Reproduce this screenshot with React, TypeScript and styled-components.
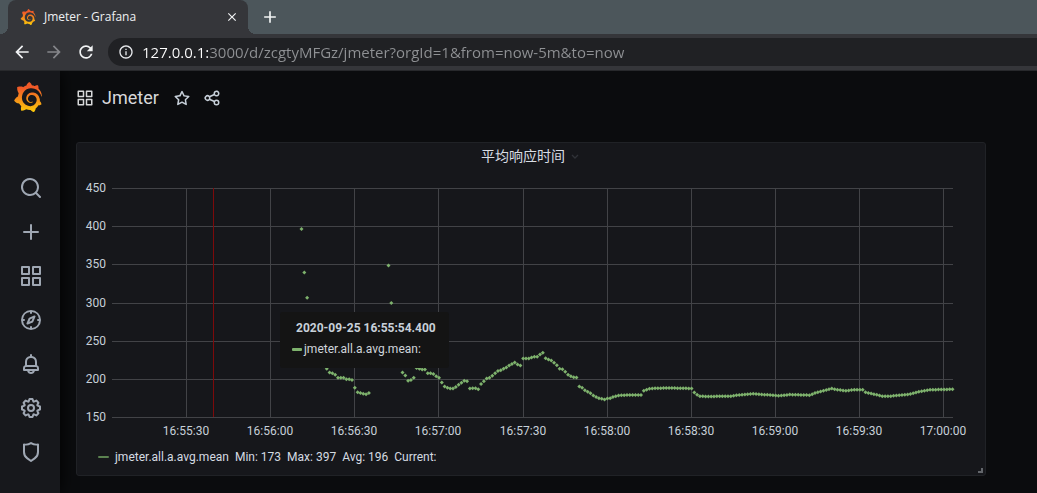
import React from "react";
import styled, { createGlobalStyle } from "styled-components";
import { SiGrafana } from "react-icons/si";
import { MdArrowBack, MdArrowForward, MdRefresh, MdClose, MdAdd, MdInfoOutline } from "react-icons/md";

const GlobalStyle = createGlobalStyle`
  *, *::before, *::after { box-sizing: border-box; }
  body {
    margin: 0;
    background: #0b0c0e;
    color: #c7d0d9;
    font-family: Roboto, "Noto Sans CJK SC", sans-serif;
    overflow-x: hidden;
  }
  button { border: 0; padding: 0; background: none; color: inherit; font: inherit; cursor: pointer; }
`;

const Window = styled.div`
  display: flex;
  flex-direction: column;
  min-height: 100vh;
`;

const TabStrip = styled.div`
  display: flex;
  align-items: stretch;
  height: 34px;
  padding-left: 8px;
  background: #4c565b;
`;

const Tab = styled.div`
  position: relative;
  display: flex;
  align-items: center;
  width: 240px;
  padding: 0 9px 0 12px;
  border-radius: 8px 8px 0 0;
  background: #35363a;
  color: #eef0f2;
  font: 12px/16px "Open Sans", sans-serif;

  &::before, &::after {
    content: "";
    position: absolute;
    bottom: 0;
    width: 8px;
    height: 8px;
  }
  &::before { right: 100%; background: radial-gradient(circle at 0 0, transparent 8px, #35363a 8px); }
  &::after { left: 100%; background: radial-gradient(circle at 100% 0, transparent 8px, #35363a 8px); }
`;

const TabTitle = styled.span`
  flex: 1;
  margin-left: 8px;
  white-space: nowrap;
`;

const ChromeButton = styled.button<{ $size: number; $dim?: boolean }>`
  display: grid;
  place-items: center;
  width: ${(p) => p.$size}px;
  height: ${(p) => p.$size}px;
  color: ${(p) => (p.$dim ? "#85868a" : "#f1f3f4")};
`;

const NewTab = styled(ChromeButton)`
  align-self: center;
  margin-left: 12px;
`;

const Toolbar = styled.div`
  display: flex;
  align-items: center;
  gap: 12px;
  height: 37px;
  padding-left: 12px;
  border-bottom: 1px solid #28292c;
  background: #35363a;
`;

const AddressBar = styled.label`
  flex: 1;
  display: flex;
  align-items: center;
  gap: 8px;
  height: 28px;
  padding-left: 10px;
  border-radius: 14px 0 0 14px;
  background: #202124;
  color: #e8eaed;
`;

/* The host part of the address is brighter than the path behind it. */
const AddressInput = styled.input`
  flex: 1;
  min-width: 0;
  height: 28px;
  padding: 0;
  border: 0;
  outline: 0;
  font: 15px/28px "Open Sans", sans-serif;
  color: #9aa0a6;
  background: linear-gradient(90deg, #ffffff 67px, #8f9194 67px);
  background-clip: text;
  -webkit-background-clip: text;
  -webkit-text-fill-color: transparent;
`;

const Workspace = styled.div`
  flex: 1;
  display: flex;
`;

const Sidebar = styled.nav`
  display: flex;
  flex-direction: column;
  align-items: center;
  width: 60px;
  padding: 11px 0 0 2px;
  background: #17181c;
  box-shadow: 0 0 16px #000000;
  clip-path: inset(0 -20px 0 0);
  color: #9fa7b3;
`;

const Brand = styled.a`
  display: block;
  height: 32px;
  margin: 0 6px 52px 0;
  svg { display: block; }
`;

const NavLink = styled.a`
  display: grid;
  place-items: center;
  width: 44px;
  height: 44px;
  color: inherit;
`;

const Main = styled.main`
  flex: 1;
  min-width: 0;
  padding: 0 51px 17px 16px;
`;

const PageBar = styled.header`
  display: flex;
  align-items: center;
  height: 54px;
  margin-bottom: 17px;
  color: #d8d9da;
`;

const PageTitle = styled.h1`
  margin: 0 14px 0 8px;
  font-size: 18px;
  line-height: 24px;
  font-weight: 400;
`;

const BarButton = styled.button`
  display: grid;
  margin-right: 12px;
  color: #c7d0d9;
`;

const Panel = styled.section`
  position: relative;
  border: 1px solid #202226;
  border-radius: 3px;
  background: #16171b;
`;

const PanelHeader = styled.header`
  display: flex;
  justify-content: center;
  align-items: center;
  gap: 4px;
  height: 28px;
  padding-bottom: 2px;
`;

const PanelTitle = styled.h2`
  margin: 0;
  font-size: 14px;
  line-height: 20px;
  font-weight: 400;
  color: #d8dde4;
`;

const Chart = styled.svg`
  display: block;
  width: 100%;
  height: auto;
  font-size: 12px;
  fill: #c7d0d9;
`;

const Legend = styled.div`
  display: flex;
  align-items: center;
  gap: 6px;
  height: 32px;
  padding: 0 21px 4px;
  font-size: 12px;
  line-height: 18px;
  color: #d5dbe2;
`;

const Swatch = styled.span<{ $width: number; $height: number; $color: string }>`
  width: ${(p) => p.$width}px;
  height: ${(p) => p.$height}px;
  border-radius: 1px;
  background: ${(p) => p.$color};
`;

const Tooltip = styled.div`
  position: absolute;
  left: 203px;
  top: 169px;
  width: 169px;
  height: 56px;
  padding: 6px 12px;
  border-radius: 3px;
  background: #141414;
  font-size: 12px;
  color: #d0d5db;
`;

const TooltipTime = styled.div`
  padding-left: 4px;
  line-height: 20px;
  font-weight: 700;
  white-space: nowrap;
  color: #c7d0d9;
`;

const TooltipSeries = styled.div`
  display: flex;
  align-items: center;
  gap: 2px;
  line-height: 22px;
`;

const ResizeHandle = styled.span`
  position: absolute;
  right: 2px;
  bottom: 2px;
  width: 5px;
  height: 5px;
  border: solid #63666b;
  border-width: 0 2px 2px 0;
`;

const ICONS = {
  search: "M21.71,20.29,18,16.61A9,9,0,1,0,16.61,18l3.68,3.68a1,1,0,0,0,1.42,0A1,1,0,0,0,21.71,20.29ZM11,18a7,7,0,1,1,7-7A7,7,0,0,1,11,18Z",
  plus: "M19,11H13V5a1,1,0,0,0-2,0v6H5a1,1,0,0,0,0,2h6v6a1,1,0,0,0,2,0V13h6a1,1,0,0,0,0-2Z",
  apps: "M10,13H3a1,1,0,0,0-1,1v7a1,1,0,0,0,1,1h7a1,1,0,0,0,1-1V14A1,1,0,0,0,10,13ZM9,20H4V15H9ZM21,2H14a1,1,0,0,0-1,1v7a1,1,0,0,0,1,1h7a1,1,0,0,0,1-1V3A1,1,0,0,0,21,2ZM20,9H15V4h5Zm1,4H14a1,1,0,0,0-1,1v7a1,1,0,0,0,1,1h7a1,1,0,0,0,1-1V14A1,1,0,0,0,21,13Zm-1,7H15V15h5ZM10,2H3A1,1,0,0,0,2,3v7a1,1,0,0,0,1,1h7a1,1,0,0,0,1-1V3A1,1,0,0,0,10,2ZM9,9H4V4H9Z",
  compass: "M12,2A10,10,0,1,0,22,12,10,10,0,0,0,12,2Zm1,17.93V19a1,1,0,0,0-2,0v.93A8,8,0,0,1,4.07,13H5a1,1,0,0,0,0-2H4.07A8,8,0,0,1,11,4.07V5a1,1,0,0,0,2,0V4.07A8,8,0,0,1,19.93,11H19a1,1,0,0,0,0,2h.93A8,8,0,0,1,13,19.93ZM15.14,7.55l-5,2.12a1,1,0,0,0-.52.52l-2.12,5a1,1,0,0,0,.21,1.1,1,1,0,0,0,.7.3.93.93,0,0,0,.4-.09l5-2.12a1,1,0,0,0,.52-.52l2.12-5a1,1,0,0,0-1.31-1.31Zm-2.49,5.1-2.28,1,1-2.28,2.28-1Z",
  bell: "M18,13.18V10a6,6,0,0,0-5-5.91V3a1,1,0,0,0-2,0V4.09A6,6,0,0,0,6,10v3.18A3,3,0,0,0,4,16v2a1,1,0,0,0,1,1H8.14a4,4,0,0,0,7.72,0H19a1,1,0,0,0,1-1V16A3,3,0,0,0,18,13.18ZM8,10a4,4,0,0,1,8,0v3H8Zm4,10a2,2,0,0,1-1.72-1h3.44A2,2,0,0,1,12,20Zm6-3H6V16a1,1,0,0,1,1-1H17a1,1,0,0,1,1,1Z",
  cog: "M21.32,9.55l-1.89-.63.89-1.78A1,1,0,0,0,20.13,6L18,3.87a1,1,0,0,0-1.15-.19l-1.78.89-.63-1.89A1,1,0,0,0,13.5,2h-3a1,1,0,0,0-.95.68L8.92,4.57,7.14,3.68A1,1,0,0,0,6,3.87L3.87,6a1,1,0,0,0-.19,1.15l.89,1.78-1.89.63A1,1,0,0,0,2,10.5v3a1,1,0,0,0,.68.95l1.89.63-.89,1.78A1,1,0,0,0,3.87,18L6,20.13a1,1,0,0,0,1.15.19l1.78-.89.63,1.89a1,1,0,0,0,.95.68h3a1,1,0,0,0,.95-.68l.63-1.89,1.78.89A1,1,0,0,0,18,20.13L20.13,18a1,1,0,0,0,.19-1.15l-.89-1.78,1.89-.63A1,1,0,0,0,22,13.5v-3A1,1,0,0,0,21.32,9.55ZM20,12.78l-1.2.4A2,2,0,0,0,17.64,16l.57,1.14-1.1,1.1L16,17.64a2,2,0,0,0-2.79,1.16l-.4,1.2H11.22l-.4-1.2A2,2,0,0,0,8,17.64l-1.14.57-1.1-1.1L6.36,16A2,2,0,0,0,5.2,13.18L4,12.78V11.22l1.2-.4A2,2,0,0,0,6.36,8L5.79,6.89l1.1-1.1L8,6.36A2,2,0,0,0,10.82,5.2l.4-1.2h1.56l.4,1.2A2,2,0,0,0,16,6.36l1.14-.57,1.1,1.1L17.64,8a2,2,0,0,0,1.16,2.79l1.2.4ZM12,8a4,4,0,1,0,4,4A4,4,0,0,0,12,8Zm0,6a2,2,0,1,1,2-2A2,2,0,0,1,12,14Z",
  shield: "M19.63,3.65a1,1,0,0,0-.84-.2,8,8,0,0,1-6.22-1.27,1,1,0,0,0-1.14,0A8,8,0,0,1,5.21,3.45a1,1,0,0,0-.84.2A1,1,0,0,0,4,4.43v7.45a9,9,0,0,0,3.77,7.33l3.65,2.6a1,1,0,0,0,1.16,0l3.65-2.6A9,9,0,0,0,20,11.88V4.43A1,1,0,0,0,19.63,3.65ZM18,11.88a7,7,0,0,1-2.93,5.7L12,19.77,8.93,17.58A7,7,0,0,1,6,11.88V5.58a10,10,0,0,0,6-1.39,10,10,0,0,0,6,1.39Z",
  star: "M22,9.67A1,1,0,0,0,21.14,9l-5.69-.83L12.9,3a1,1,0,0,0-1.8,0L8.55,8.16,2.86,9a1,1,0,0,0-.81.68,1,1,0,0,0,.25,1l4.13,4-1,5.68A1,1,0,0,0,6.9,21.44L12,18.77l5.1,2.67a.93.93,0,0,0,.46.12,1,1,0,0,0,.59-.19,1,1,0,0,0,.4-1l-1-5.68,4.13-4A1,1,0,0,0,22,9.67Zm-6.15,4a1,1,0,0,0-.29.88l.72,4.2-3.76-2a1.06,1.06,0,0,0-.94,0l-3.76,2,.72-4.2a1,1,0,0,0-.29-.88l-3-3,4.21-.61a1,1,0,0,0,.76-.55L12,5.7l1.88,3.82a1,1,0,0,0,.76.55l4.21.61Z",
  share: "M18,14a4,4,0,0,0-3.08,1.48l-5.1-2.35a3.64,3.64,0,0,0,0-2.26l5.1-2.35A4,4,0,1,0,14,6a4.17,4.17,0,0,0,.07.71L8.79,9.14a4,4,0,1,0,0,5.72l5.28,2.43A4.17,4.17,0,0,0,14,18a4,4,0,1,0,4-4ZM18,4a2,2,0,1,1-2,2A2,2,0,0,1,18,4ZM6,14a2,2,0,1,1,2-2A2,2,0,0,1,6,14Zm12,6a2,2,0,1,1,2-2A2,2,0,0,1,18,20Z",
};

type IconName = keyof typeof ICONS;

const Icon = ({ name, size }: { name: IconName; size: number }) => (
  <svg width={size} height={size} viewBox="0 0 24 24" fill="currentColor" aria-hidden="true">
    <path d={ICONS[name]} />
  </svg>
);

const Logo = styled(SiGrafana)`
  flex: none;
  fill: url(#grafana-gradient);
`;

const GradientDefs = styled.svg`
  position: absolute;
  width: 0;
  height: 0;
`;

const NAV: { icon: IconName; label: string }[] = [
  { icon: "search", label: "Search" },
  { icon: "plus", label: "Create" },
  { icon: "apps", label: "Dashboards" },
  { icon: "compass", label: "Explore" },
  { icon: "bell", label: "Alerting" },
  { icon: "cog", label: "Configuration" },
  { icon: "shield", label: "Server Admin" },
];

/* Mean response time in ms, one sample per second; each run is [first second, samples]. */
const RUNS: [number, number[]][] = [
  [0, [397, 340, 307]],
  [8, [217, 214, 209, 208, 206, 202, 202, 202, 200, 200, 199, 189, 183, 182, 181, 180.5, 182]],
  [31, [349, 300]],
  [36, [209, 205, 198, 199, 202, 215, 214, 213, 213, 208, 208, 207, 204, 202]],
  [50, [196, 190.6, 189, 188, 188, 190, 193, 195.5, 198, 197.5]],
  [60, [188, 188.4, 188.4, 187, 194, 197.5, 201, 202, 204.6, 208, 211, 212, 214, 215.5, 218, 220, 222, 219.4, 218]],
  [79, [227.3, 227.3, 227.3, 228.6, 229.5, 229.5, 232.5, 234.8, 227.7, 226, 224.7, 221.7, 218.5, 214, 213.3, 210, 206, 204, 202.8, 202.4]],
  [99, [190.6, 189, 185.8, 183.7, 181.8, 178.8, 177, 175.3, 174.5, 173.6, 175, 175.3, 177, 178]],
];

/* The steady part is given by its turning points [second, ms]. */
const STEADY: [number, number][] = [
  [113, 178.8], [116, 179.5], [121, 179.5], [122, 185], [123, 186.3], [124, 187.6], [126, 188.4],
  [132, 188.6], [139, 188], [140, 182.8], [141, 179.7], [142, 178], [144, 177.5], [153, 178],
  [155, 179.2], [161, 181], [166, 179.7], [170, 178.4], [174, 180], [181, 179.2], [183, 182],
  [186, 185], [189, 188], [191, 186.3], [194, 185], [197, 186.3], [200, 186.3], [201, 183],
  [204, 180.5], [207, 178], [210, 178], [216, 180], [220, 183.7], [224, 186.3], [232, 187],
];

const samples: [number, number][] = RUNS.flatMap(([start, values]) =>
  values.map((v, i): [number, number] => [start + i, v])
);
STEADY.forEach(([t, v], k) => {
  samples.push([t, v]);
  const next = STEADY[k + 1];
  if (!next) return;
  for (let s = t + 1; s < next[0]; s++) {
    samples.push([s, v + ((next[1] - v) * (s - t)) / (next[0] - t)]);
  }
});

const PLOT = { left: 35, top: 17, width: 841, height: 229 };
const yOf = (ms: number) => ((450 - ms) / 300) * PLOT.height;
const xOf = (second: number) => 189.5 + second * 2.806;

const Y_TICKS = [450, 400, 350, 300, 250, 200, 150];
const X_TICKS = [
  "16:55:30", "16:56:00", "16:56:30", "16:57:00", "16:57:30",
  "16:58:00", "16:58:30", "16:59:00", "16:59:30", "17:00:00",
];

const ResponseChart = () => (
  <Chart viewBox="0 0 908 272" role="img" aria-label="平均响应时间">
    <g transform={`translate(${PLOT.left} ${PLOT.top})`}>
      {Y_TICKS.map((v) => {
        const y = Math.round(yOf(v));
        return (
          <g key={v}>
            <rect x={0} y={y} width={PLOT.width} height={1} fill="#424347" shapeRendering="crispEdges" />
            <text x={-6} y={y + 4} textAnchor="end">{v}</text>
          </g>
        );
      })}
      {X_TICKS.map((label, i) => {
        const x = Math.round(74 + i * 84.15);
        return (
          <g key={label}>
            <rect x={x} y={0} width={1} height={PLOT.height} fill="#424347" shapeRendering="crispEdges" />
            <text x={x} y={247} textAnchor="middle">{label}</text>
          </g>
        );
      })}
      <rect x={101} y={0} width={1} height={PLOT.height} fill="#7d0a0b" shapeRendering="crispEdges" />
      {samples.map(([t, v]) => (
        <path
          key={t}
          d={`M${xOf(t)} ${yOf(v) - 1.5}l2 2l-2 2l-2 -2z`}
          fill="#7eb26d"
        />
      ))}
    </g>
  </Chart>
);

export default function App() {
  return (
    <Window>
      <GlobalStyle />
      <GradientDefs aria-hidden="true">
        <linearGradient id="grafana-gradient" x1="0" y1="0" x2="0" y2="1">
          <stop offset="0.2" stopColor="#f05a28" />
          <stop offset="1" stopColor="#fbca0a" />
        </linearGradient>
      </GradientDefs>
      <TabStrip>
        <Tab>
          <Logo size={16} />
          <TabTitle>Jmeter - Grafana</TabTitle>
          <ChromeButton $size={14} aria-label="Close tab"><MdClose size={14} /></ChromeButton>
        </Tab>
        <NewTab $size={20} aria-label="New tab"><MdAdd size={20} /></NewTab>
      </TabStrip>
      <Toolbar>
        <ChromeButton $size={20} aria-label="Back"><MdArrowBack size={20} /></ChromeButton>
        <ChromeButton $size={20} $dim aria-label="Forward"><MdArrowForward size={20} /></ChromeButton>
        <ChromeButton $size={20} aria-label="Reload"><MdRefresh size={20} /></ChromeButton>
        <AddressBar>
          <MdInfoOutline size={16} />
          <AddressInput
            aria-label="Address"
            spellCheck={false}
            defaultValue="127.0.0.1:3000/d/zcgtyMFGz/jmeter?orgId=1&from=now-5m&to=now"
          />
        </AddressBar>
      </Toolbar>
      <Workspace>
        <Sidebar>
          <Brand href="#" aria-label="Home"><Logo size={30} /></Brand>
          {NAV.map((n) => (
            <NavLink key={n.label} href="#" aria-label={n.label}>
              <Icon name={n.icon} size={24} />
            </NavLink>
          ))}
        </Sidebar>
        <Main>
          <PageBar>
            <Icon name="apps" size={18} />
            <PageTitle>Jmeter</PageTitle>
            <BarButton aria-label="Mark as favorite"><Icon name="star" size={18} /></BarButton>
            <BarButton aria-label="Share dashboard"><Icon name="share" size={18} /></BarButton>
          </PageBar>
          <Panel>
            <PanelHeader>
              <PanelTitle>平均响应时间</PanelTitle>
              <svg width="12" height="12" viewBox="0 0 12 12" fill="none" stroke="#303238" strokeWidth="1.3" aria-hidden="true">
                <path d="M3 5l3 3 3-3" />
              </svg>
            </PanelHeader>
            <ResponseChart />
            <Legend>
              <Swatch $width={11} $height={2} $color="#5b8250" />
              <span>jmeter.all.a.avg.mean</span>
              <span>Min: 173</span>
              <span>Max: 397</span>
              <span>Avg: 196</span>
              <span>Current:</span>
            </Legend>
            <Tooltip>
              <TooltipTime>2020-09-25 16:55:54.400</TooltipTime>
              <TooltipSeries>
                <Swatch $width={10} $height={3} $color="#7eb26d" />
                <span>jmeter.all.a.avg.mean:</span>
              </TooltipSeries>
            </Tooltip>
            <ResizeHandle />
          </Panel>
        </Main>
      </Workspace>
    </Window>
  );
}
